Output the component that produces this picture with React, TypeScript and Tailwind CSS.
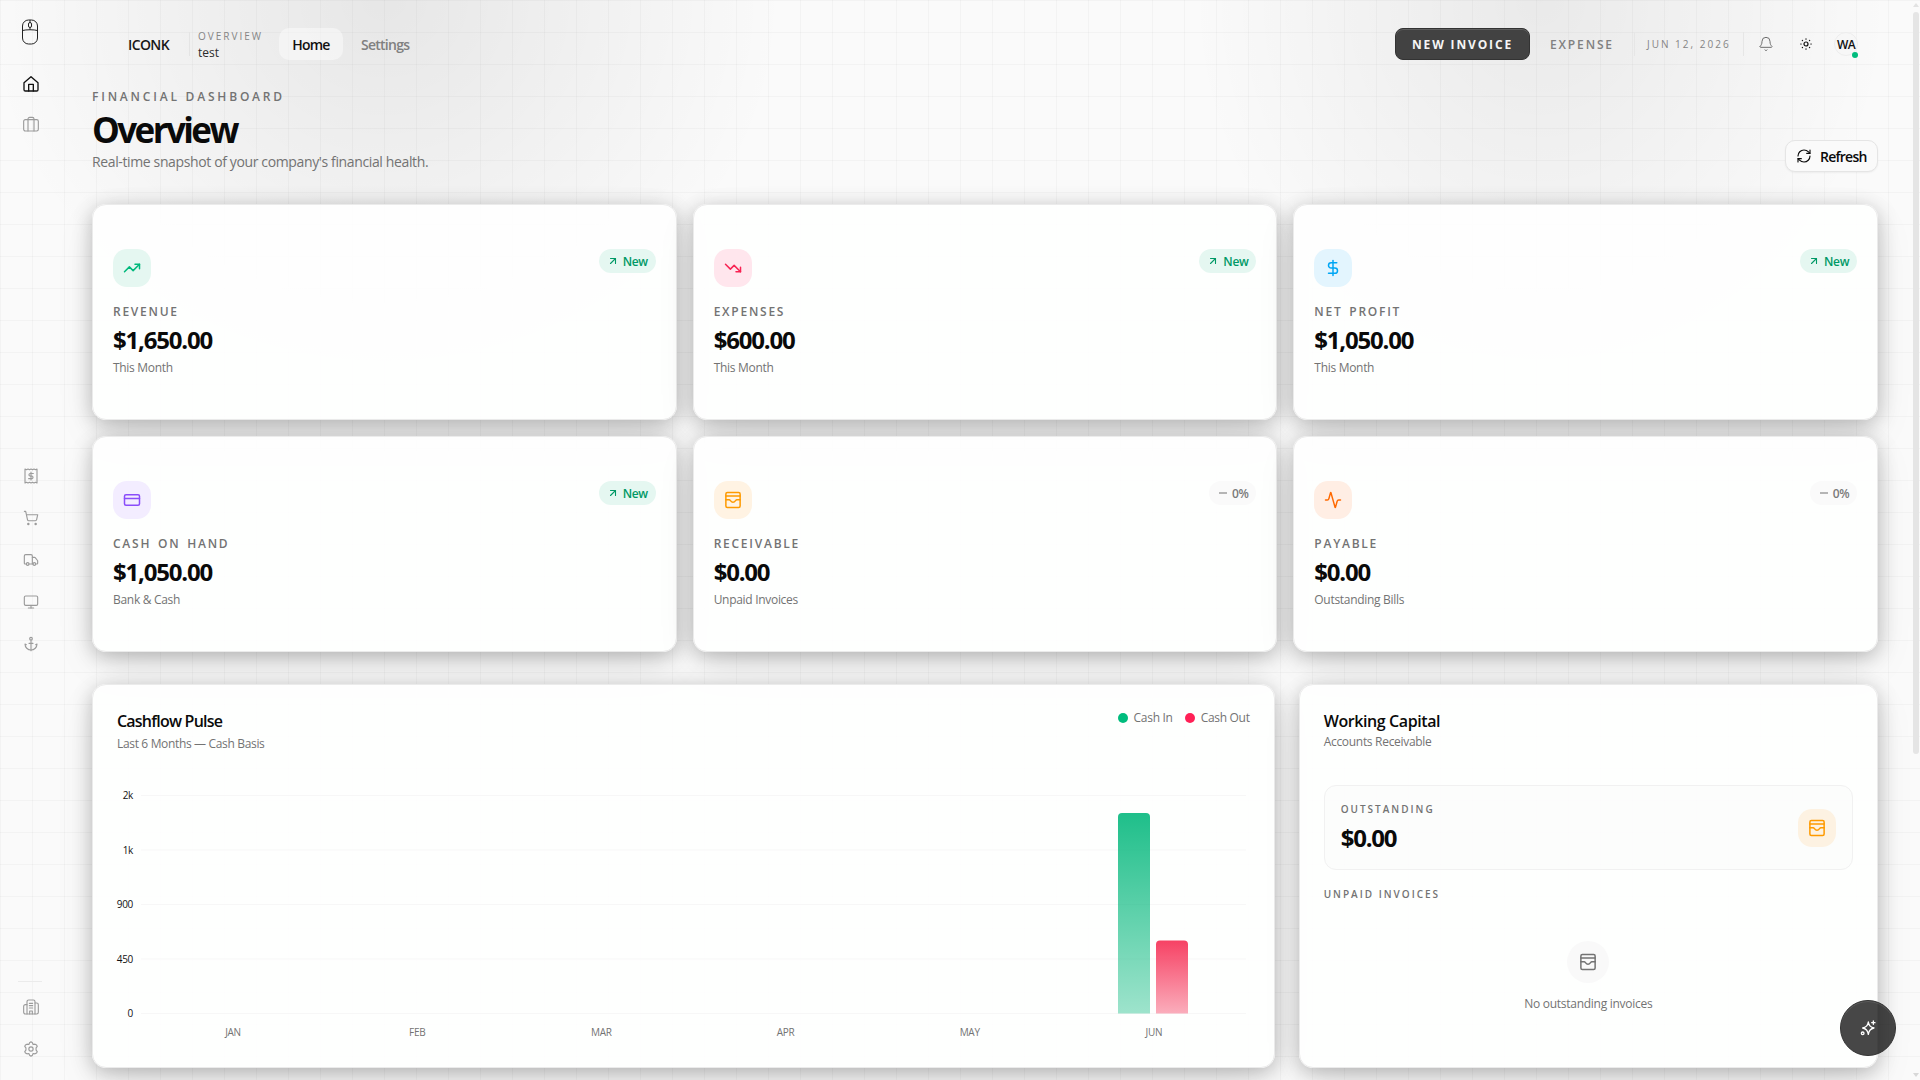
import React from "react";
import { ArrowUpRight, ShoppingCart, Truck, Monitor, Anchor, TrendingUp, TrendingDown, DollarSign, CreditCard, Activity, Bell, RefreshCw } from "lucide-react";

type IconProps = { className?: string; children?: React.ReactNode; w?: number };

function Glyph({ className, children, w = 1.5 }: IconProps) {
  return (
    <svg viewBox="0 0 24 24" fill="none" stroke="currentColor" strokeWidth={w} strokeLinecap="round" strokeLinejoin="round" className={className}>
      {children}
    </svg>
  );
}

const MouseLogo = () => (
  <svg viewBox="0 0 18 26" fill="none" stroke="currentColor" strokeWidth="1" className="h-[26px] w-[18px] text-[#222]">
    <rect x="1.5" y="1" width="15" height="24" rx="6" />
    <path d="M1.5 11.5C5 10.5 13 10.5 16.500 11.500M9 1v2.500M9 8.500v2.200" />
    <rect x="7.500" y="3.500" width="3" height="5" rx="1.500" />
  </svg>
);
const HomeIcon = () => (
  <Glyph className="size-4" w={2}>
    <path d="M1.500 10 12 1l10.500 9V20.500a2 2 0 0 1-2 2h-17a2 2 0 0 1-2-2Z" />
    <path d="M8.500 22.500v-10h7v10" />
  </Glyph>
);
const CaseIcon = () => (
  <Glyph className="size-4" w={1.700}>
    <rect x="1" y="5.500" width="22" height="17" rx="2.500" />
    <path d="M7.500 22.500v-18A2.500 2.500 0 0 1 10 2h4a2.500 2.500 0 0 1 2.500 2.500v18" />
  </Glyph>
);
const ReceiptIcon = () => (
  <Glyph className="size-4" w={1.700}>
    <path d="M3 1.500v21l2.250-1.200 2.250 1.200 2.250-1.200 2.250 1.200 2.250-1.200 2.250 1.200 2.250-1.200L21 22.500v-21l-2.250 1.200-2.250-1.200-2.250 1.200L12 1.500 9.750 2.700 7.500 1.500 5.250 2.700Z" />
    <path d="M15.500 8.200h-5a2 2 0 0 0 0 3.900h3a2 2 0 0 1 0 3.900h-5M12 6v12" />
  </Glyph>
);
const BuildingIcon = () => (
  <Glyph className="size-4" w={1.700}>
    <path d="M6 22.500V4a2.500 2.500 0 0 1 2.500-2.500h7A2.500 2.500 0 0 1 18 4v18.500Z" />
    <path d="M6 8.500H3.500A2.500 2.500 0 0 0 1 11v9a2.500 2.500 0 0 0 2.500 2.500H6M18 6h2.500A2.500 2.500 0 0 1 23 8.500V20a2.500 2.500 0 0 1-2.500 2.500H18M9.500 6.500h5M9.500 10h5M9.500 13.500h5M10 22.500V18h4v4.500" />
  </Glyph>
);
const GearIcon = () => (
  <Glyph className="size-4" w={1.700}>
    <path d="M9.900 2.500 12 1.200l2.100 1.300 1.100 2.700 2.900-.5 2.300 1.200 1 2.200-1.800 2.300v3.200l1.800 2.300-1 2.200-2.300 1.200-2.900-.5-1.100 2.700L12 22.800l-2.100-1.300-1.100-2.700-2.900.5-2.300-1.200-1-2.200 1.800-2.300v-3.200L2.600 8.100l1-2.200 2.300-1.200 2.900.5Z" />
    <circle cx="12" cy="12" r="3.200" />
  </Glyph>
);
const InvoiceIcon = ({ className }: { className?: string }) => (
  <Glyph className={className} w={2}>
    <rect x="2.500" y="2" width="19" height="20" rx="2" />
    <path d="M2.500 6.500h19M2.500 11.500H7c1.500 0 2 3.500 5 3.500s3.500-3.500 5-3.500h4.500" />
  </Glyph>
);
const SunIcon = () => (
  <Glyph className="size-3 text-[#111]" w={2.400}>
    <circle cx="12" cy="12" r="4" />
    <path d="M12 1.500v.8M12 21.700v.8M1.500 12h.8M21.700 12h.8M4.600 4.600l.5.5M18.900 18.900l.5.5M4.600 19.400l.5-.5M18.900 5.100l.5-.5" />
  </Glyph>
);
const SparkIcon = () => (
  <Glyph className="size-4 text-white" w={2}>
    <path d="M12.500 3c.8 5.200 2.800 8 8.500 9-5.700 1-7.700 3.800-8.500 9.500-.8-5.700-2.800-8.500-8.500-9.500 5.700-1 7.700-3.800 8.500-9Z" />
    <path d="M20 1.500v5M17.500 4h5" />
    <circle cx="4" cy="20" r="2" />
  </Glyph>
);

const CARD =
  "rounded-[14px] border border-[#ebebeb] bg-white/90 shadow-[0_4px_20px_rgba(0,0,0,0.23),0_14px_44px_-8px_rgba(0,0,0,0.13)]";

type Stat = { label: string; value: string; sub: string; up: boolean; tint: string; icon: React.ReactNode };

const STATS: Stat[] = [
  { label: "REVENUE", value: "$1,650.00", sub: "This Month", up: true, tint: "bg-[#e5f7f1] text-[#00b97c]", icon: <TrendingUp className="size-[18px]" /> },
  { label: "EXPENSES", value: "$600.00", sub: "This Month", up: true, tint: "bg-[#ffe6ed] text-[#f82353]", icon: <TrendingDown className="size-[18px]" /> },
  { label: "NET PROFIT", value: "$1,050.00", sub: "This Month", up: true, tint: "bg-[#e3f5fe] text-[#00a6f4]", icon: <DollarSign className="size-[18px]" /> },
  { label: "CASH ON HAND", value: "$1,050.00", sub: "Bank & Cash", up: true, tint: "bg-[#f3edff] text-[#8a4dfa]", icon: <CreditCard className="size-[18px]" /> },
  { label: "RECEIVABLE", value: "$0.00", sub: "Unpaid Invoices", up: false, tint: "bg-[#fff3e3] text-[#fe9a00]", icon: <InvoiceIcon className="size-[18px]" /> },
  { label: "PAYABLE", value: "$0.00", sub: "Outstanding Bills", up: false, tint: "bg-[#ffeee4] text-[#ff6900]", icon: <Activity className="size-[18px]" /> },
];

function StatCard({ s }: { s: Stat }) {
  return (
    <div className={`${CARD} flex h-[216px] flex-col px-5 pt-11`}>
      <div className="flex items-start justify-between">
        <div className={`flex size-[38px] items-center justify-center rounded-[14px] ${s.tint}`}>{s.icon}</div>
        {s.up ? (
          <div className="flex h-6 w-[57px] items-center gap-1 rounded-full bg-[#e5f7f1] pt-px pl-2 text-[12px] font-semibold tracking-[-0.300px] text-[#009966]">
            <ArrowUpRight className="mb-px size-3" strokeWidth={2.200} />
            <span>New</span>
          </div>
        ) : (
          <div className="flex h-6 items-center gap-[5px] rounded-full bg-[#fafafa] pt-px pr-2 pl-[10px] text-[12px] font-semibold tracking-[-0.500px] text-[#7a7a7a]">
            <span className="mb-0.5 h-0.5 w-2 bg-[#b5b5b5]" />
            <span>0%</span>
          </div>
        )}
      </div>
      <div className="mt-[17px] text-[12px] leading-4 font-semibold tracking-[1.750px] text-[#737373] [word-spacing:2px]">{s.label}</div>
      <div className="mt-1 text-[24px] leading-8 font-bold tracking-[-1.200px] text-[#0a0a0a]">{s.value}</div>
      <div className="mt-1 text-[12px] leading-4 tracking-[-0.300px] text-[#737373]">{s.sub}</div>
    </div>
  );
}

const NAV = [
  { top: "mt-[22px]", icon: <HomeIcon />, tone: "text-[#111]" },
  { top: "mt-6", icon: <CaseIcon />, tone: "text-[#9b9b9b]" },
  { top: "mt-[336px]", icon: <ReceiptIcon />, tone: "text-[#9b9b9b]" },
  { top: "mt-[26px]", icon: <ShoppingCart className="size-4" strokeWidth={1.700} />, tone: "text-[#9b9b9b]" },
  { top: "mt-[26px]", icon: <Truck className="size-4" strokeWidth={1.700} />, tone: "text-[#9b9b9b]" },
  { top: "mt-[26px]", icon: <Monitor className="size-4" strokeWidth={1.700} />, tone: "text-[#9b9b9b]" },
  { top: "mt-[26px]", icon: <Anchor className="size-4" strokeWidth={1.700} />, tone: "text-[#9b9b9b]" },
];

function Sidebar() {
  return (
    <aside className="flex w-[60px] shrink-0 flex-col items-center pt-[19px]">
      <MouseLogo />
      <div className="mt-[9px] flex flex-col items-center pl-px">
        {NAV.map((n, i) => (
          <div key={i} className={`${n.top} ${n.tone}`}>{n.icon}</div>
        ))}
      </div>
      <div className="mt-[329px] h-px w-6 bg-[#ebebeb]" />
      <div className="mt-[17px] pl-px text-[#9b9b9b]"><BuildingIcon /></div>
      <div className="mt-[26px] pl-px text-[#9b9b9b]"><GearIcon /></div>
    </aside>
  );
}

function Header() {
  return (
    <header className="flex h-8 items-center">
      <div className="ml-9 w-[61px] text-[14px] font-semibold tracking-[-0.600px] text-[#171717]">ICONK</div>
      <div className="h-6 w-px bg-[#e4e4e4]" />
      <div className="ml-2 w-[81px] pt-0.5 whitespace-nowrap">
        <div className="text-[10px] leading-[15px] tracking-[2px] text-[#858585]">OVERVIEW</div>
        <div className="text-[12px] leading-[17px] text-[#2b2b2b]">test</div>
      </div>
      <div className="flex h-8 w-16 items-center justify-center rounded-[10px] bg-white/45 text-[14px] font-semibold tracking-[-0.800px] text-[#111]">Home</div>
      <div className="ml-[18px] text-[14px] font-semibold tracking-[-0.750px] text-[#808080]">Settings</div>
      <div className="ml-auto flex items-center">
        <div className="flex h-8 w-[135px] items-center justify-center rounded-lg border border-[#333] bg-[#424242] pt-px text-[12px] font-bold tracking-[1.850px] text-[#f5f5f5] shadow-[inset_0_1px_0_rgba(255,255,255,0.15)]">NEW INVOICE</div>
        <div className="ml-5 w-[84px] pt-px text-[12px] font-semibold tracking-[1.850px] text-[#808080]">EXPENSE</div>
        <div className="h-6 w-px bg-[#e6e6e6]" />
        <div className="ml-3 w-[96px] pt-px text-[10px] tracking-[2px] whitespace-nowrap text-[#858585]">JUN 12, 2026</div>
        <div className="h-6 w-px bg-[#e6e6e6]" />
        <Bell className="ml-[14px] size-4 text-[#6e6e6e]" strokeWidth={1.500} />
        <div className="ml-[26px]"><SunIcon /></div>
        <div className="relative mr-5 ml-[22px] flex size-6 items-center justify-center rounded-full border border-[#ededed] bg-[#f7f7f7] pt-px text-[12px] font-semibold tracking-[-0.700px] text-[#111]">
          WA
          <span className="absolute -right-px -bottom-[3px] size-1.5 rounded-full bg-[#00bc7d]" />
        </div>
      </div>
    </header>
  );
}

const TICKS = ["2k", "1k", "900", "450", "0"];
const MONTHS = ["JAN", "FEB", "MAR", "APR", "MAY", "JUN"];

function Chart() {
  return (
    <svg viewBox="0 0 1133 260" className="mt-[38px] h-[260px] w-[1133px] overflow-visible" fontSize="10" letterSpacing="-0.3">
      <defs>
        <linearGradient id="in" x1="0" y1="0" x2="0" y2="1">
          <stop offset="0" stopColor="#00b67a" stopOpacity="0.88" />
          <stop offset="1" stopColor="#00b67a" stopOpacity="0.38" />
        </linearGradient>
        <linearGradient id="out" x1="0" y1="0" x2="0" y2="1">
          <stop offset="0" stopColor="#f5284f" stopOpacity="0.88" />
          <stop offset="1" stopColor="#f5284f" stopOpacity="0.38" />
        </linearGradient>
      </defs>
      {TICKS.map((t, i) => (
        <g key={t}>
          <line x1="24" x2="1129" y1={5.5 + i * 54.5} y2={5.5 + i * 54.5} stroke="#f7f7f7" />
          <text x="16" y={9 + i * 54.5} textAnchor="end" fill="#111">{t}</text>
        </g>
      ))}
      {MONTHS.map((m, i) => (
        <text key={m} x={116 + i * 184.17} y="246" textAnchor="middle" fill="#737373">{m}</text>
      ))}
      <path d="M1001 223.500V27a4 4 0 0 1 4-4h24a4 4 0 0 1 4 4v196.500Z" fill="url(#in)" />
      <path d="M1039 223.500V154.500a4 4 0 0 1 4-4h24a4 4 0 0 1 4 4v69Z" fill="url(#out)" />
    </svg>
  );
}

export default function App() {
  return (
    <div
      className="relative flex h-[1080px] w-[1920px] overflow-hidden bg-[#fafafa] bg-[linear-gradient(to_right,rgba(0,0,0,0.028)_1px,transparent_1px),linear-gradient(to_bottom,rgba(0,0,0,0.028)_1px,transparent_1px),radial-gradient(400px_370px_at_384px_0px,rgba(0,0,0,0.078),transparent),radial-gradient(350px_370px_at_1540px_0px,rgba(0,0,0,0.068),transparent)] bg-[size:32px_32px,32px_32px,auto,auto]"
      style={{ fontFamily: '"Open Sans", "Noto Sans", sans-serif' }}
    >
      <Sidebar />
      <main className="ml-8 w-[1786px] shrink-0 pt-7">
        <Header />
        <section className="flex h-36 items-start justify-between pt-7">
          <div className="pt-px whitespace-nowrap">
            <div className="text-[12px] leading-4 font-semibold tracking-[2.800px] text-[#737373]">FINANCIAL DASHBOARD</div>
            <div className="mt-[5px] text-[35px] leading-10 font-bold tracking-[-2.600px] text-[#0a0a0a]">Overview</div>
            <div className="mt-0.5 text-[14px] leading-5 tracking-[-0.370px] text-[#737373]">Real-time snapshot of your company's financial health.</div>
          </div>
          <div className="mt-[52px] flex h-8 w-[93px] items-center rounded-[10px] border border-[#e5e5e5] bg-[#fafafa] pl-2.5 text-[14px] font-semibold tracking-[-0.750px] text-[#0a0a0a] shadow-xs">
            <RefreshCw className="mr-2 size-4" strokeWidth={1.700} />
            Refresh
          </div>
        </section>

        <section className="grid grid-cols-3 gap-4">
          {STATS.map((s) => <StatCard key={s.label} s={s} />)}
        </section>

        <section className="mt-8 grid grid-cols-3 gap-6">
          <div className={`${CARD} col-span-2 h-96 px-6 pt-6`}>
            <div className="flex justify-between">
              <div>
                <div className="text-[16px] leading-6 font-semibold tracking-[-0.780px] text-[#0a0a0a]">Cashflow Pulse</div>
                <div className="mt-[3px] text-[12px] leading-4 tracking-[-0.340px] text-[#737373]">Last 6 Months — Cash Basis</div>
              </div>
              <div className="flex h-[17px] items-center text-[12px] tracking-[-0.300px] text-[#737373]">
                <span className="mr-1.5 size-2.5 rounded-full bg-[#00bc7d]" />
                <span className="pt-px">Cash In</span>
                <span className="mr-1.5 ml-3 size-2.5 rounded-full bg-[#ff2056]" />
                <span className="pt-px">Cash Out</span>
              </div>
            </div>
            <Chart />
          </div>

          <div className={`${CARD} h-96 px-6 pt-6`}>
            <div className="text-[16px] leading-6 font-semibold tracking-[-0.400px] text-[#0a0a0a]">Working Capital</div>
            <div className="mt-px text-[12px] leading-4 tracking-[-0.300px] text-[#737373]">Accounts Receivable</div>
            <div className="mt-[35px] flex h-[85px] items-center justify-between rounded-xl border border-[#f1f1f1] bg-[#fafafa]/30 px-4">
              <div>
                <div className="text-[10px] leading-4 font-semibold tracking-[2px] text-[#737373]">OUTSTANDING</div>
                <div className="mt-[5px] mb-px text-[24px] leading-8 font-bold tracking-[-1.200px] text-[#0a0a0a]">$0.00</div>
              </div>
              <div className="flex size-[38px] items-center justify-center rounded-[14px] bg-[#fdf2e2] text-[#fe9a00]">
                <InvoiceIcon className="size-[18px]" />
              </div>
            </div>
            <div className="mt-4 text-[10px] leading-4 font-semibold tracking-[2px] text-[#737373]">UNPAID INVOICES</div>
            <div className="mt-[39px] flex flex-col items-center">
              <div className="flex size-[42px] items-center justify-center rounded-full bg-[#f9f9f9] text-[#737373]">
                <InvoiceIcon className="size-[18px]" />
              </div>
              <div className="mt-[13px] text-[12px] leading-4 tracking-[-0.270px] text-[#737373]">No outstanding invoices</div>
            </div>
          </div>
        </section>
      </main>

      <div className="ml-auto flex h-full w-2 flex-col items-center">
        <span className="mt-[3px] h-0 w-0 border-x-[3px] border-b-4 border-x-transparent border-b-[#e2e2e2]" />
        <span className="mt-[5px] h-[742px] w-1.5 rounded-full bg-[#e5e5e5]" />
        <span className="mt-auto mb-[3px] h-0 w-0 border-x-[3px] border-t-4 border-x-transparent border-t-[#d8d8d8]" />
      </div>

      <div className="absolute top-[1000px] left-[1840px] flex size-14 items-center justify-center rounded-full border border-[#333] bg-[#0a0a0a]/75 shadow-[inset_0_1px_0_rgba(255,255,255,0.12)]">
        <SparkIcon />
      </div>
    </div>
  );
}
